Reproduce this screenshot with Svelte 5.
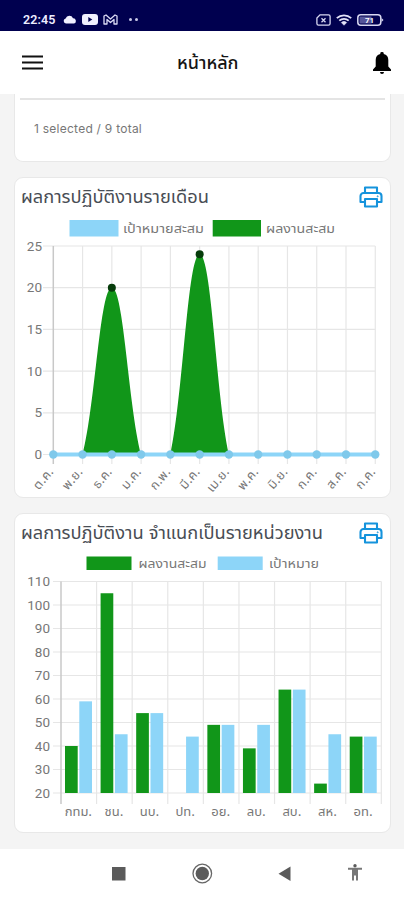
<script lang="ts">
  const GREEN = '#119619';
  const BLUE = '#8dd5f8';

  const months = ['ต.ค.', 'พ.ย.', 'ธ.ค.', 'ม.ค.', 'ก.พ.', 'มี.ค.', 'เม.ย.', 'พ.ค.', 'มิ.ย.', 'ก.ค.', 'ส.ค.', 'ก.ค.'];
  const monthTicks = [0, 5, 10, 15, 20, 25];
  const peaks = [
    { index: 2, value: 20 },
    { index: 5, value: 24 }
  ];

  const units = [
    { name: 'กทม.', done: 40, target: 59 },
    { name: 'ชน.', done: 105, target: 45 },
    { name: 'นบ.', done: 54, target: 54 },
    { name: 'ปท.', done: 20, target: 44 },
    { name: 'อย.', done: 49, target: 49 },
    { name: 'ลบ.', done: 39, target: 49 },
    { name: 'สบ.', done: 64, target: 64 },
    { name: 'สห.', done: 24, target: 45 },
    { name: 'อท.', done: 44, target: 44 }
  ];
  const unitTicks = [20, 30, 40, 50, 60, 70, 80, 90, 100, 110];

  // line chart scales
  const mx = (i: number) => 37.3 + i * 29.27;
  const my = (v: number) => 238.5 - v * 8.34;

  // bar chart scales
  const ux = (i: number) => 45 + i * 35.59;
  const uy = (v: number) => 241 - (v - 20) * 2.35;

  function hill(index: number, value: number) {
    const left = mx(index - 1);
    const mid = mx(index);
    const right = mx(index + 1);
    const base = my(0);
    const top = my(value);
    const lift = base - (base - top) * 0.3;
    return `M${left} ${base}C${left + 13} ${lift} ${mid - 12} ${top} ${mid} ${top}C${mid + 12} ${top} ${right - 13} ${lift} ${right} ${base}Z`;
  }
</script>

{#snippet printer()}
  <svg class="printer" viewBox="0 0 24 22" fill="none" stroke="#1593dc" stroke-width="2.1" stroke-linejoin="round">
    <path d="M6 7V1.5h12V7" />
    <path d="M6 16H1.5V10a3 3 0 0 1 3-3h15a3 3 0 0 1 3 3v6H18" />
    <path d="M6 13h12v7.5H6z" />
    <circle cx="18.7" cy="10.3" r="0.5" stroke-width="1" />
  </svg>
{/snippet}

<div class="screen">
  <div class="status">
    <span class="clock">22:45</span>
    <svg class="cloud" viewBox="0 0 14 9"><path d="M3 8.5a2.6 2.6 0 0 1-.4-5.1A4 4 0 0 1 10 3.3a2.7 2.7 0 0 1 1.2 5.2z" fill="#f1f1ff" /></svg>
    <svg class="video" viewBox="0 0 16 11"><rect width="16" height="11" rx="3" fill="#f1f1ff" /><path d="M6.3 3v5l4-2.5z" fill="#00004f" /></svg>
    <svg class="mail" viewBox="0 0 15 11" fill="none" stroke="#dcdcf5" stroke-width="1.3" stroke-linejoin="round"><path d="M1 10V2l2-1 4.5 4L12 1l2 1v8h-3V5.5L7.5 8.5 4 5.5V10z" /></svg>
    <span class="dots"><i></i><i></i></span>
    <span class="spacer"></span>
    <svg class="sim" viewBox="0 0 15 12" fill="none" stroke="#d8d8f2" stroke-width="1.3">
      <path d="M4 .8h8.5a1.6 1.6 0 0 1 1.6 1.6v7.2a1.6 1.6 0 0 1-1.6 1.6h-10A1.6 1.6 0 0 1 .9 9.6V4z" />
      <path d="M5.5 4.2l4 4m0-4l-4 4" />
    </svg>
    <svg class="wifi" viewBox="0 0 16 12" fill="none" stroke="#e2e2f8" stroke-width="1.8">
      <path d="M.8 4.2a10.5 10.5 0 0 1 14.4 0M3.3 6.7a7 7 0 0 1 9.4 0" />
      <path d="M5.3 8.6a4 4 0 0 1 5.400 0L8 11.3z" fill="#e2e2f8" stroke-width=".5" />
    </svg>
    <svg class="battery" viewBox="0 0 27 12">
      <rect x=".8" y=".8" width="23" height="10.4" rx="3" fill="none" stroke="#d8d8f2" stroke-width="1.5" />
      <path d="M2.5 2.5h12v7h-12z" fill="#55559a" />
      <path d="M24.500 4l2 2-2 2z" fill="#d8d8f2" />
      <text x="12.5" y="9" text-anchor="middle" fill="#fff" font-size="8" font-weight="700">71</text>
    </svg>
  </div>

  <header>
    <svg class="menu" viewBox="0 0 21 15" stroke="#111" stroke-width="2.2"><path d="M0 1.5h21M0 7.5h21M0 13.5h21" /></svg>
    <h1>หน้าหลัก</h1>
    <svg class="bell" viewBox="0 0 18 22"><path d="M9 0a1.7 1.7 0 0 1 1.7 2A6.2 6.2 0 0 1 15.3 8v6.5L18 17.5V19H0v-1.5l2.7-3V8a6.2 6.2 0 0 1 4.6-6A1.7 1.7 0 0 1 9 0zM7 20h4a2 2 0 0 1-4 0z" /></svg>
  </header>

  <main>
    <section class="card summary">
      <p>1 selected / 9 total</p>
    </section>

    <section class="card">
      <div class="card-head">
        <h2 class="monthly">ผลการปฏิบัติงานรายเดือน</h2>
        {@render printer()}
      </div>
      <svg class="chart" viewBox="0 0 374 280">
        <rect x="53.5" y="4" width="49" height="16.5" fill={BLUE} />
        <text x="107" y="16.5" textLength="81" lengthAdjust="spacingAndGlyphs">เป้าหมายสะสม</text>
        <rect x="196.7" y="4" width="48.3" height="16.5" fill={GREEN} />
        <text x="250" y="16.5" textLength="69" lengthAdjust="spacingAndGlyphs">ผลงานสะสม</text>

        {#each monthTicks as tick}
          <line class="grid" x1="27" x2="359.3" y1={my(tick)} y2={my(tick)} />
          <text class="tick" x="26" y={my(tick) + 4.5} text-anchor="end">{tick}</text>
        {/each}
        {#each months as month, i}
          <line class={i === 0 ? 'axis' : 'grid'} x1={mx(i)} x2={mx(i)} y1="30" y2="248" />
          <text class="month" text-anchor="end" transform="translate({mx(i) + 1} 256) rotate(-50)">{month}</text>
        {/each}

        {#each peaks as peak}
          <path d={hill(peak.index, peak.value)} fill={GREEN} />
          <circle cx={mx(peak.index)} cy={my(peak.value)} r="4" fill="#063c0b" />
        {/each}

        <line x1={mx(0)} x2={mx(11)} y1={my(0)} y2={my(0)} stroke={BLUE} stroke-width="4" />
        {#each months as _, i}
          <circle cx={mx(i)} cy={my(0)} r="4.2" fill="#7fc9eb" />
        {/each}
      </svg>
    </section>

    <section class="card">
      <div class="card-head">
        <h2 class="by-unit">ผลการปฏิบัติงาน จำแนกเป็นรายหน่วยงาน</h2>
        {@render printer()}
      </div>
      <svg class="chart" viewBox="0 0 374 280">
        <rect x="70.5" y="4.5" width="45" height="13.5" fill={GREEN} />
        <text x="122.5" y="15.5" textLength="68" lengthAdjust="spacingAndGlyphs">ผลงานสะสม</text>
        <rect x="201.7" y="4.5" width="45" height="13.5" fill={BLUE} />
        <text x="253" y="15.5" textLength="50" lengthAdjust="spacingAndGlyphs">เป้าหมาย</text>

        {#each unitTicks as tick}
          <line class="grid" x1="37" x2="365.3" y1={uy(tick)} y2={uy(tick)} />
          <text class="tick" x="34" y={uy(tick) + 4.5} text-anchor="end">{tick}</text>
        {/each}
        {#each Array(units.length + 1) as _, i}
          <line class={i === 0 ? 'axis' : 'grid'} x1={ux(i)} x2={ux(i)} y1="29.5" y2="252" />
        {/each}

        {#each units as unit, i}
          <rect x={ux(i) + 4} y={uy(unit.done)} width="12.7" height={uy(20) - uy(unit.done)} fill={GREEN} />
          <rect x={ux(i) + 18.3} y={uy(unit.target)} width="12.7" height={uy(20) - uy(unit.target)} fill={BLUE} />
          <text class="unit" x={ux(i) + 17.4} y="264" text-anchor="middle">{unit.name}</text>
        {/each}
      </svg>
    </section>
  </main>

  <nav>
    <svg viewBox="0 0 404 51" fill="#5b5b5b">
      <rect x="112" y="18" width="13.5" height="13.5" />
      <circle cx="202.3" cy="24.5" r="6.7" />
      <circle cx="202.3" cy="24.5" r="9.3" fill="none" stroke="#666" stroke-width="1.3" />
      <path d="M278.5 24.8l12-7.3v14.6z" />
      <circle cx="355" cy="16.8" r="1.7" />
      <path d="M348 18.8h14v2h-4V31.5h-2v-5h-2v5h-2V20.8h-4z" fill="#777" />
    </svg>
  </nav>
</div>

<style>
  :global(body) {
    margin: 0;
    background: #fff;
  }

  .screen {
    display: flex;
    flex-direction: column;
    width: 404px;
    height: 900px;
    overflow: hidden;
    background: #f4f4f4;
    font-family: Inter, 'Noto Sans Thai', 'Noto Sans', sans-serif;
  }

  .status {
    display: flex;
    align-items: center;
    box-sizing: border-box;
    flex: 0 0 31px;
    padding: 8px 20px 0 23px;
    background: #00004f;
  }

  .clock {
    width: 33px;
    margin-right: 7px;
    color: #ededff;
    font: 600 12.5px Roboto, sans-serif;
    letter-spacing: 0.1px;
  }

  .cloud {
    width: 14px;
    height: 9px;
    margin-right: 5px;
  }

  .video {
    width: 16px;
    height: 11px;
    margin-right: 5px;
  }

  .mail {
    width: 15px;
    height: 11px;
    margin-right: 11px;
  }

  .dots {
    display: flex;
    gap: 3px;
  }

  .dots i {
    width: 3px;
    height: 3px;
    border-radius: 50%;
    background: #c9c9e8;
  }

  .spacer {
    flex: 1;
  }

  .sim {
    width: 15px;
    height: 12px;
    margin-right: 5px;
  }

  .wifi {
    width: 16px;
    height: 12px;
    margin-right: 5px;
  }

  .battery {
    width: 27px;
    height: 12px;
    font-family: Roboto, sans-serif;
  }

  header {
    display: flex;
    align-items: center;
    justify-content: space-between;
    box-sizing: border-box;
    flex: 0 0 63px;
    padding: 0 13px 0 21.5px;
    background: #fff;
  }

  .menu {
    width: 21px;
    height: 15px;
  }

  h1 {
    margin: 0;
    color: #151515;
    font-size: 18px;
    font-weight: 500;
    line-height: 24px;
    white-space: nowrap;
  }

  .bell {
    width: 18px;
    height: 22px;
  }

  main {
    display: flex;
    flex: 1;
    flex-direction: column;
    gap: 15px;
    padding: 0 13px 0 14px;
  }

  .card {
    box-sizing: border-box;
    height: 320.5px;
    border: 1px solid #e8e8e8;
    border-radius: 9px;
    background: #fff;
    overflow: hidden;
  }

  .summary {
    height: 68px;
    padding: 4px 5px 0;
    border-top: 0;
    border-radius: 0 0 9px 9px;
  }

  .summary p {
    margin: 0;
    padding: 20px 0 0 14px;
    border-top: 2px solid #e4e4e4;
    color: #777;
    font-size: 12px;
    letter-spacing: 0.25px;
    line-height: 18px;
  }

  .card-head {
    display: flex;
    align-items: center;
    justify-content: space-between;
    box-sizing: border-box;
    height: 38px;
    padding: 0 7px 0 6px;
  }

  h2 {
    margin: 0;
    padding-bottom: 2px;
    color: #484d54;
    font-size: 18.25px;
    font-weight: 400;
    line-height: 28px;
    white-space: nowrap;
  }

  .printer {
    width: 24px;
    height: 22px;
  }

  .chart {
    display: block;
    width: 374px;
    height: 280px;
    margin-left: 1px;
  }

  .grid {
    stroke: #e6e6e6;
    stroke-width: 1.2;
  }

  .axis {
    stroke: #c8c8c8;
    stroke-width: 1.5;
  }

  .chart text {
    fill: #777;
    font-size: 13px;
  }

  .chart .month {
    font-size: 12.5px;
    letter-spacing: 0.3px;
  }

  .chart .tick {
    font-family: Roboto, sans-serif;
    font-size: 13.5px;
  }

  nav {
    flex: 0 0 51px;
    background: #fff;
  }

  nav svg {
    display: block;
    width: 404px;
    height: 51px;
  }
</style>
